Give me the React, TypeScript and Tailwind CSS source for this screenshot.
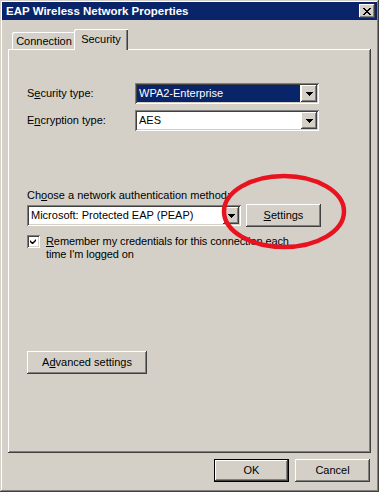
import React from "react";

const raised =
  "shadow-[inset_-1px_-1px_0_#404040,inset_1px_1px_0_#ffffff,inset_-2px_-2px_0_#808080]";
const sunken =
  "shadow-[inset_1px_1px_0_#808080,inset_-1px_-1px_0_#ffffff,inset_2px_2px_0_#404040,inset_-2px_-2px_0_#d4d0c8]";

function Arrow() {
  return (
    <div className={`w-[16px] h-[17px] bg-[#d4d0c8] ${raised} flex items-center justify-center`}>
      <svg width="7" height="4" viewBox="0 0 7 4">
        <path d="M0 0h7v1H0zM1 1h5v1H1zM2 2h3v1H2zM3 3h1v1H3z" fill="#000" />
      </svg>
    </div>
  );
}

function Select({ text, selected, w }: { text: string; selected?: boolean; w: string }) {
  return (
    <div className={`${w} h-[21px] bg-white ${sunken} p-[2px] flex items-stretch`}>
      <div
        className={`flex-1 flex items-center pl-[2px] mr-[1px] ${
          selected ? "bg-[#0a246a] text-white" : "text-black"
        }`}
      >
        {text}
      </div>
      <Arrow />
    </div>
  );
}

function Btn({ children, w, def }: { children: React.ReactNode; w: string; def?: boolean }) {
  return (
    <div
      className={`${w} h-[23px] bg-[#d4d0c8] flex items-center justify-center ${
        def
          ? "shadow-[inset_0_0_0_1px_#000000,inset_-2px_-2px_0_#404040,inset_2px_2px_0_#ffffff,inset_-3px_-3px_0_#808080]"
          : raised
      }`}
    >
      {children}
    </div>
  );
}

export default function App() {
  return (
    <div className="w-[379px] h-[492px] bg-[#d4d0c8] relative text-[11px] leading-[13px] text-black font-['Liberation_Sans',Arial,sans-serif] shadow-[inset_-1px_-1px_0_#404040,inset_1px_1px_0_#d4d0c8,inset_-2px_-2px_0_#808080,inset_2px_2px_0_#ffffff] pt-[2px] px-[2px] flex flex-col">
      <div className="h-[18px] bg-[#0a246a] flex items-center justify-between pl-[4px] pr-[2px]">
        <span className="text-white font-bold text-[11.5px]">EAP Wireless Network Properties</span>
        <div className={`w-[16px] h-[14px] bg-[#d4d0c8] ${raised} flex items-center justify-center`}>
          <svg width="8" height="7" viewBox="0 0 8 7">
            <path
              d="M0 0h2v1H0zM6 0h2v1H6zM1 1h2v1H1zM5 1h2v1H5zM2 2h4v1H2zM3 3h2v1H3zM2 4h4v1H2zM1 5h2v1H1zM5 5h2v1H5zM0 6h2v1H0zM6 6h2v1H6z"
              fill="#000"
            />
          </svg>
        </div>
      </div>

      <div className="px-[6px] pt-[9px]">
        <div className="h-[20px] flex items-end pl-[4px] relative z-10">
          <div className="w-[64px] h-[17px] bg-[#d4d0c8] flex items-center justify-center pt-[1px] rounded-tl-[2px] shadow-[inset_1px_1px_0_#ffffff,inset_-1px_0_0_#404040,inset_-2px_0_0_#808080]">
            Connection
          </div>
          <div className="w-[54px] h-[21px] -mb-[1px] -ml-[2px] bg-[#d4d0c8] flex items-start justify-center pt-[4px] rounded-tl-[2px] shadow-[inset_1px_1px_0_#ffffff,inset_-1px_0_0_#404040,inset_-2px_0_0_#808080]">
            Security
          </div>
        </div>
        <div className={`h-[404px] ${raised} pl-[19px] pt-[34px] flex flex-col`}>
          <div className="flex items-center h-[21px]">
            <div className="w-[108px]">
              S<u>e</u>curity type:
            </div>
            <Select text="WPA2-Enterprise" selected w="w-[184px]" />
          </div>
          <div className="flex items-center h-[21px] mt-[6px]">
            <div className="w-[108px]">
              E<u>n</u>cryption type:
            </div>
            <Select text="AES" w="w-[184px]" />
          </div>
          <div className="mt-[58px]">
            Ch<u>o</u>ose a network authentication method:
          </div>
          <div className="flex items-center gap-[5px] mt-[2px]">
            <Select text="Microsoft: Protected EAP (PEAP)" w="w-[214px]" />
            <Btn w="w-[75px]">
              <u>S</u>ettings
            </Btn>
          </div>
          <div className="flex items-start gap-[6px] mt-[8px]">
            <div className={`w-[13px] h-[13px] bg-white ${sunken} flex items-center justify-center shrink-0`}>
              <svg width="7" height="7" viewBox="0 0 7 7">
                <path d="M6 0v3L3 6H2L0 4V2l2 2h1l3-3z" fill="#000" />
              </svg>
            </div>
            <div className="tracking-[-0.1px]">
              <u>R</u>emember my credentials for this connection each
              <br />
              time I'm logged on
            </div>
          </div>
          <div className="mt-[90px]">
            <Btn w="w-[120px]">
              A<u>d</u>vanced settings
            </Btn>
          </div>
        </div>
      </div>

      <div className="flex justify-end gap-[6px] pr-[7px] mt-[6px]">
        <Btn w="w-[75px]" def>
          OK
        </Btn>
        <Btn w="w-[75px]">Cancel</Btn>
      </div>

      <svg
        className="absolute left-[221px] top-[173px] pointer-events-none"
        width="126"
        height="77"
        viewBox="0 0 126 77"
      >
        <ellipse cx="63" cy="38.5" rx="60" ry="35.5" fill="none" stroke="#e8131f" strokeWidth="4.5" />
      </svg>
    </div>
  );
}
